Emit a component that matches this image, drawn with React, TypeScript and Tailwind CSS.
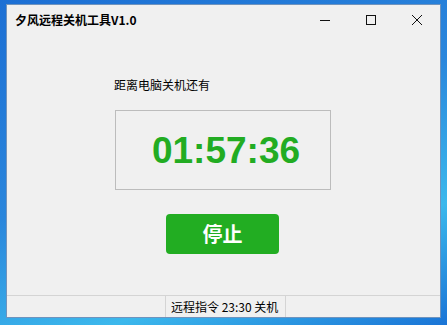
import React from "react";

export default function App() {
  const cjk = { fontFamily: '"Noto Sans CJK SC", "Noto Sans", sans-serif' };
  return (
    <div
      className="w-[447px] h-[325px] overflow-hidden pt-[4px] pl-[6px] bg-[linear-gradient(160deg,#1c6fd4_0%,#2a86dc_45%,#3cb8ec_75%,#1a74d6_100%)]"
      style={cjk}
    >
      <div className="w-[435px] h-[314px] bg-[#f0f0f0] border border-[#6f93bd] flex flex-col">
        {/* title bar */}
        <div className="h-[29px] flex items-center shrink-0">
          <div className="pl-[8px] text-[12px] font-bold text-black leading-none flex-1 pt-[1px]">
            夕风远程关机工具V1.0
          </div>
          <div className="flex h-full">
            <div className="w-[46px] h-full flex items-center justify-center">
              <svg width="12" height="12" viewBox="0 0 12 12">
                <path d="M1 6.5H11" stroke="#111" strokeWidth="1" />
              </svg>
            </div>
            <div className="w-[46px] h-full flex items-center justify-center">
              <svg width="12" height="12" viewBox="0 0 12 12">
                <rect x="1.5" y="1.5" width="9" height="9" fill="none" stroke="#111" strokeWidth="1" />
              </svg>
            </div>
            <div className="w-[46px] h-full flex items-center justify-center">
              <svg width="12" height="12" viewBox="0 0 12 12">
                <path d="M1 1L11 11M11 1L1 11" stroke="#111" strokeWidth="1" />
              </svg>
            </div>
          </div>
        </div>
        {/* body */}
        <div className="flex flex-col flex-1">
          <div className="mt-[43px] ml-[107px] text-[12px] leading-[16px] text-black">
            距离电脑关机还有
          </div>
          <div className="mt-[17px] ml-[108px] w-[216px] h-[80px] border border-[#bcbcbc] flex items-center justify-center">
            <span
              className="text-[37px] font-bold text-[#22ac22] leading-none ml-[6px]"
              style={{ fontFamily: '"Liberation Sans", Arial, sans-serif' }}
            >
              01:57:36
            </span>
          </div>
          <div className="mt-[24px] ml-[159px] w-[113px] h-[40px] rounded-[4px] bg-[#22ad22] flex items-center justify-center">
            <span className="text-white text-[20px] font-bold leading-none">停止</span>
          </div>
          <div className="flex-1" />
          <div className="h-[22px] border-t border-[#d4d4d4] flex text-[12px] text-black shrink-0">
            <div className="w-[159px] border-r border-[#d4d4d4]" />
            <div className="w-[120px] border-r border-[#d4d4d4] flex items-center pl-[5px] whitespace-nowrap">
              远程指令 23:30 关机
            </div>
            <div className="flex-1" />
          </div>
        </div>
      </div>
    </div>
  );
}
